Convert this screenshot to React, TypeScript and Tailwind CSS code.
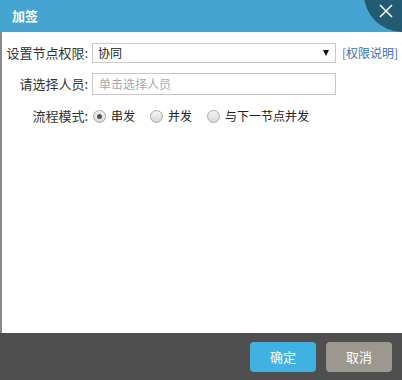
export default function App() {
  const font = { fontFamily: '"Microsoft YaHei", "Noto Sans CJK SC", "Liberation Sans", sans-serif' };

  const modes = [
    { label: "串发", checked: true },
    { label: "并发", checked: false },
    { label: "与下一节点并发", checked: false },
  ];

  return (
    <div className="w-[402px] h-[380px] flex flex-col bg-[#8a8a8a] overflow-hidden" style={font}>
      {/* header */}
      <div className="relative h-[32px] shrink-0 bg-[#45a5d0] flex items-center pl-[12px] overflow-hidden">
        <span className="text-white text-[13px] font-bold">加签</span>
        <div className="absolute -right-[4px] -top-[8px] w-[42px] h-[40px] rounded-bl-[38px] bg-[#245b74] flex items-start justify-center pt-[12px] pl-[2px]">
          <svg width="14" height="14" viewBox="0 0 14 14" stroke="white" strokeWidth="1.5" fill="none">
            <path d="M1 1L13 13M13 1L1 13" />
          </svg>
        </div>
      </div>

      {/* body */}
      <div className="flex-1 bg-white ml-[2px] pt-[11px] text-[12px] text-[#333]">
        <div className="flex items-center h-[20px]">
          <div className="w-[86px] text-right text-[13px]">设置节点权限:</div>
          <div className="ml-[4px] w-[244px] h-[20px] border border-[#c8c8c8] flex items-center pl-[5px] pr-[6px]">
            <span className="flex-1 text-[#222]">协同</span>
            <span className="w-0 h-0 border-l-[3.5px] border-r-[3.5px] border-t-[6px] border-l-transparent border-r-transparent border-t-[#111]" />
          </div>
          <span className="ml-[6px] text-[#3d6fb5]">[权限说明]</span>
        </div>

        <div className="flex items-center h-[22px] mt-[10px]">
          <div className="w-[86px] text-right text-[13px]">请选择人员:</div>
          <div className="ml-[4px] w-[244px] h-[22px] border border-[#c8c8c8] flex items-center pl-[6px] text-[#aaa]">
            单击选择人员
          </div>
        </div>

        <div className="flex items-center h-[20px] mt-[11px]">
          <div className="w-[86px] text-right text-[13px]">流程模式:</div>
          <div className="ml-[5px] flex items-center">
            {modes.map((m) => (
              <div key={m.label} className="flex items-center mr-[15px]">
                <span className="w-[13px] h-[13px] rounded-full border border-[#aaa] bg-gradient-to-b from-[#f4f4f4] to-[#d8d8d8] flex items-center justify-center">
                  {m.checked && <span className="w-[5px] h-[5px] rounded-full bg-[#555]" />}
                </span>
                <span className="ml-[5px] text-[#222]">{m.label}</span>
              </div>
            ))}
          </div>
        </div>
      </div>

      {/* footer */}
      <div className="h-[47px] shrink-0 bg-[#4f4f4f] flex items-center justify-end pr-[10px] gap-[10px]">
        <button className="w-[66px] h-[30px] rounded-[4px] bg-[#41b1e1] text-white text-[13px]">确定</button>
        <button className="w-[66px] h-[30px] rounded-[4px] bg-[#9c978f] text-white text-[13px]">取消</button>
      </div>
    </div>
  );
}
